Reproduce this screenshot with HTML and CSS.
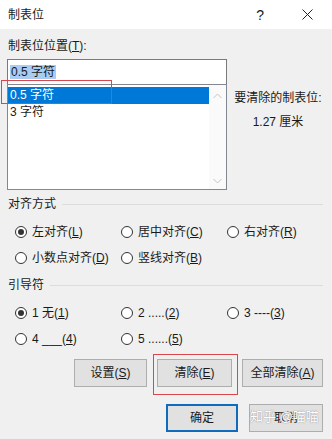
FILE: index.html
```html
<!DOCTYPE html>
<html lang="zh-CN">
    <head>
        <title>制表位</title>
        <meta charset="utf-8">
        <link rel="stylesheet" href="styles.css">
    </head>
    <body>
        <div class="dialog">
            <div class="titlebar">
                <span class="title">制表位</span>
                <span class="help">?</span>
                <svg class="close" width="11" height="11" viewBox="0 0 11 11">
                    <path d="M0.5 0.5 L10.5 10.5 M10.5 0.5 L0.5 10.5" stroke="#222" stroke-width="1"/>
                </svg>
            </div>

            <div class="main">
                <div class="top">
                    <div class="tabcol">
                        <div class="label">制表位位置(<u>T</u>):</div>
                        <div class="input"><span class="sel">0.5 字符</span></div>
                        <div class="list">
                            <div class="items">
                                <div class="item active">0.5 字符</div>
                                <div class="item">3 字符</div>
                            </div>
                            <div class="scroll">
                                <svg width="9" height="6" viewBox="0 0 9 6"><path d="M0.5 5 L4.5 1 L8.5 5" fill="none" stroke="#c4c4c4"/></svg>
                                <svg width="9" height="6" viewBox="0 0 9 6"><path d="M0.5 1 L4.5 5 L8.5 1" fill="none" stroke="#c4c4c4"/></svg>
                            </div>
                        </div>
                    </div>
                    <div class="clearinfo">
                        <div>要清除的制表位:</div>
                        <div>1.27 厘米</div>
                    </div>
                </div>

                <div class="group">
                    <span>对齐方式</span><span class="rule"></span>
                </div>
                <div class="options">
                    <label class="opt"><span class="radio checked"></span><span>左对齐(<u>L</u>)</span></label>
                    <label class="opt"><span class="radio"></span><span>居中对齐(<u>C</u>)</span></label>
                    <label class="opt"><span class="radio"></span><span>右对齐(<u>R</u>)</span></label>
                    <label class="opt"><span class="radio"></span><span>小数点对齐(<u>D</u>)</span></label>
                    <label class="opt"><span class="radio"></span><span>竖线对齐(<u>B</u>)</span></label>
                </div>

                <div class="group lead">
                    <span>引导符</span><span class="rule"></span>
                </div>
                <div class="options">
                    <label class="opt"><span class="radio checked"></span><span>1 无(<u>1</u>)</span></label>
                    <label class="opt"><span class="radio"></span><span>2 .....(<u>2</u>)</span></label>
                    <label class="opt"><span class="radio"></span><span>3 ----(<u>3</u>)</span></label>
                    <label class="opt"><span class="radio"></span><span>4 ___(<u>4</u>)</span></label>
                    <label class="opt"><span class="radio"></span><span>5 ......(<u>5</u>)</span></label>
                </div>

                <div class="buttons">
                    <div class="btn set"><span>设置(<u>S</u>)</span></div>
                    <div class="btn clr"><span>清除(<u>E</u>)</span></div>
                    <div class="btn all"><span>全部清除(<u>A</u>)</span></div>
                </div>
                <div class="buttons final">
                    <div class="btn ok">确定</div>
                    <div class="btn cancel">取消<span class="watermark">知乎 @喵喵</span></div>
                </div>
            </div>

            <div class="mark mark-list"></div>
            <div class="mark mark-btn"></div>
        </div>
    </body>
</html>
```

FILE: styles.css
```css
body {
    margin: 0;
    background: #f0f0f0;
}
.dialog {
    position: relative;
    width: 332px;
    height: 439px;
    overflow: hidden;
    background: #f0f0f0;
    font: 12px/16px "Liberation Sans", "Noto Sans CJK SC", sans-serif;
    color: #1a1a1a;
}
u {
    text-decoration: underline;
    text-underline-offset: 1px;
}
.titlebar {
    display: flex;
    align-items: center;
    height: 29px;
    background: #fff;
    padding-left: 8px;
}
.title {
    flex: 1;
}
.help {
    font-size: 14px;
    margin-right: 38px;
}
.close {
    margin-right: 19px;
}
.main {
    padding: 0 9px 0 7px;
}
.top {
    display: flex;
}
.tabcol {
    width: 220px;
}
.label {
    margin-top: 9px;
    padding-left: 1px;
}
.input {
    box-sizing: border-box;
    height: 26px;
    margin-top: 5px;
    background: #fff;
    border: 1px solid #7a7a7a;
    padding: 4px 2px;
}
.sel {
    background: #a8cdf1;
    padding: 0 1px;
}
.list {
    box-sizing: border-box;
    display: flex;
    height: 106px;
    margin-top: -1px;
    background: #fff;
    border: 1px solid #828790;
}
.items {
    flex: 1;
    padding-top: 2px;
}
.item {
    height: 17px;
    line-height: 17px;
    padding-left: 2px;
}
.item.active {
    background: #0078d7;
    color: #fff;
}
.scroll {
    width: 17px;
    display: flex;
    flex-direction: column;
    justify-content: space-between;
    align-items: center;
    padding: 8px 0 5px;
    background: #fafafa;
}
.clearinfo {
    flex: 1;
    padding: 57px 0 0 6px;
    text-align: center;
    line-height: 24px;
    white-space: nowrap;
}
.group {
    display: flex;
    align-items: center;
    margin-top: 6px;
    padding-left: 1px;
}
.group.lead {
    margin-top: 11px;
}
.rule {
    flex: 1;
    height: 1px;
    margin-left: 6px;
    background: #dcdcdc;
}
.options {
    display: grid;
    grid-template-columns: repeat(3, 106px);
    row-gap: 10px;
    margin: 12px 0 0 8px;
}
.opt {
    display: flex;
    align-items: center;
    gap: 5px;
    white-space: nowrap;
}
.radio {
    box-sizing: border-box;
    width: 12px;
    height: 12px;
    border: 1px solid #333;
    border-radius: 50%;
    background: #fff;
    display: flex;
    align-items: center;
    justify-content: center;
}
.radio.checked::after {
    content: "";
    width: 6px;
    height: 6px;
    border-radius: 50%;
    background: #333;
}
.buttons {
    display: flex;
    justify-content: flex-end;
    gap: 10px;
    margin-top: 12px;
}
.buttons.final {
    margin-top: 17px;
    gap: 11px;
}
.btn {
    position: relative;
    box-sizing: border-box;
    height: 28px;
    display: flex;
    align-items: center;
    justify-content: center;
    background: #e1e1e1;
    border: 1px solid #adadad;
}
.set { width: 73px; }
.clr { width: 75px; }
.all { width: 81px; }
.ok {
    width: 72px;
    border: 2px solid #0f6cbd;
}
.cancel {
    width: 74px;
}
.watermark {
    position: absolute;
    left: 0;
    top: 4px;
    font-size: 13px;
    color: #fff;
    white-space: nowrap;
    text-shadow: 0 0 1px #999, 0 0 1px #999;
}
.mark {
    position: absolute;
    border: 1px solid #d9464b;
}
.mark-list {
    left: 1px;
    top: 80px;
    width: 109px;
    height: 22px;
}
.mark-btn {
    left: 153px;
    top: 354px;
    width: 83px;
    height: 39px;
}
```
